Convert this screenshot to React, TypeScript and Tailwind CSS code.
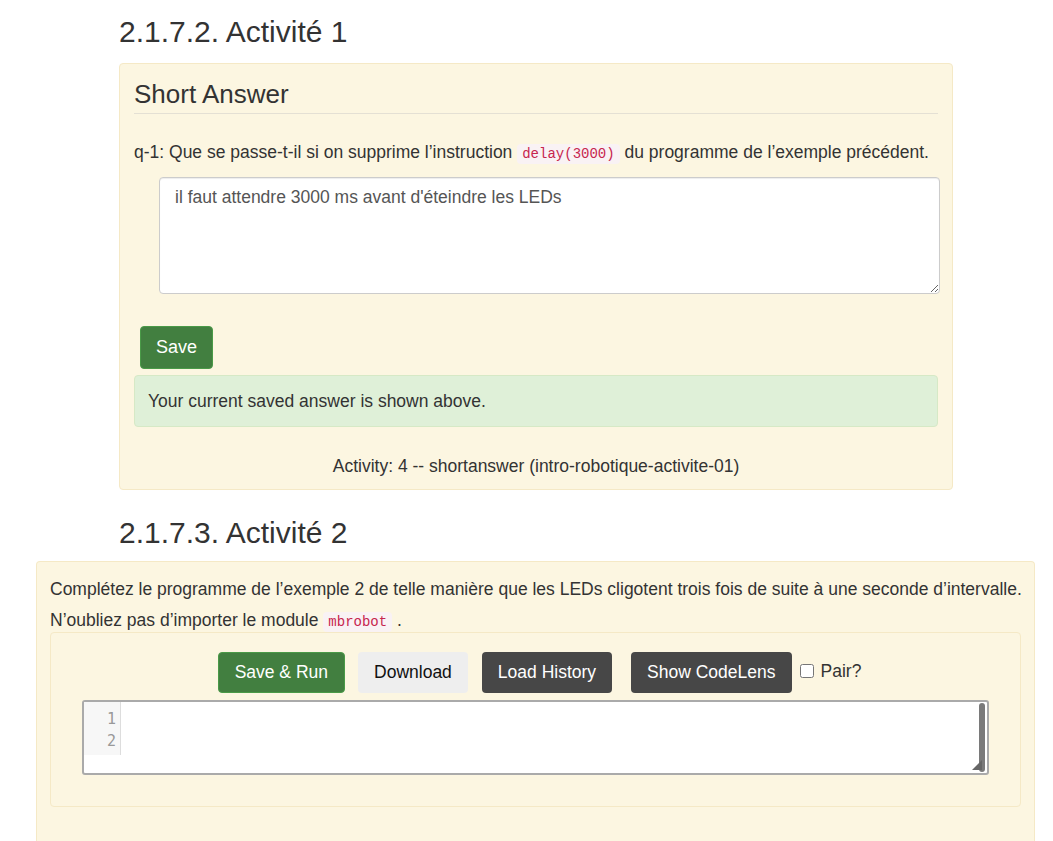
import React from 'react';

const font = { fontFamily: '"Liberation Sans", Arial, sans-serif' };

const Code = ({ children }: { children: React.ReactNode }) => (
  <code className="rounded bg-[#f9f2f4] px-[5px] py-[2px] font-['Liberation_Mono',monospace] text-[14px] text-[#c7254e]">
    {children}
  </code>
);

const ShortAnswer = () => (
  <div className="ml-[119px] w-[834px] rounded border border-[#f5e9c6] bg-[#fcf6e1] px-[14px] pb-[11px] pt-[15px]">
    <h4 className="border-b border-[#e4e0d4] pb-[4px] text-[26px] leading-[30px] text-[#333]">Short Answer</h4>
    <p className="mt-[26px] whitespace-nowrap text-[17.5px] leading-[24px] text-[#333]">
      q-1: Que se passe-t-il si on supprime l’instruction <Code>delay(3000)</Code> du programme de l’exemple précédent.
    </p>
    <div className="ml-[25px] mt-[11px]">
      <textarea
        className="block h-[117px] w-[781px] resize-y rounded border border-[#ccc] bg-white px-[15px] py-[7px] text-[17.5px] leading-[24px] text-[#555] shadow-[inset_0_1px_1px_rgba(0,0,0,0.075)] outline-none"
        defaultValue="il faut attendre 3000 ms avant d'éteindre les LEDs"
        style={font}
      />
    </div>
    <button className="ml-[6px] mt-[32px] h-[43px] rounded border border-[#4a9a48] bg-[#427f40] px-[15px] text-[18px] text-white">
      Save
    </button>
    <div className="mt-[6px] rounded border border-[#d6e9c6] bg-[#dff0d8] px-[13px] py-[13px] text-[17.5px] leading-[24px] text-[#333]">
      Your current saved answer is shown above.
    </div>
    <p className="mt-[27px] text-center text-[17.5px] leading-[24px] text-[#333]">
      Activity: 4 -- shortanswer (intro-robotique-activite-01)
    </p>
  </div>
);

const Btn = ({ children, className }: { children: React.ReactNode; className: string }) => (
  <button className={`h-[41px] whitespace-nowrap rounded px-[16px] text-[17.5px] ${className}`}>{children}</button>
);

const CodeEditor = () => (
  <div className="mx-[31px] mt-[7px] flex h-[75px] rounded-[3px] border-2 border-[#aaa] bg-white">
    <div className="flex h-[53px] w-[37px] flex-col items-end border-r border-[#ddd] bg-[#f7f7f7] pr-[4px] pt-[6px] font-['DejaVu_Sans_Mono',monospace] text-[15px] leading-[22px] text-[#999]">
      <span>1</span>
      <span>2</span>
    </div>
    <div className="flex-1" />
    <div className="relative my-[1px] mr-[2px] w-[6px] rounded-[3px] bg-[#7a7a7a]">
      <svg className="absolute bottom-[2px] right-[3px]" width="10" height="10" viewBox="0 0 10 10">
        <path d="M10 0 L10 10 L0 10 Z" fill="#666" />
      </svg>
    </div>
  </div>
);

const ActiveCode = () => (
  <div className="ml-[36px] w-[999px] rounded-t border border-b-0 border-[#f5e9c6] bg-[#fcf6e1] px-[13px] pb-[40px] pt-[12px] text-[#333]">
    <p className="whitespace-nowrap text-[17.5px] leading-[31px]">
      Complétez le programme de l’exemple 2 de telle manière que les LEDs cligotent trois fois de suite à une seconde d’intervalle.
      <br />
      N’oubliez pas d’importer le module <Code>mbrobot</Code> .
    </p>
    <div className="mt-[-6px] h-[175px] rounded border border-[#f5e9c6] pt-[19px]">
      <div className="flex items-start justify-center">
        <Btn className="ml-[8px] border border-[#4a9a48] bg-[#427f40] text-white">Save &amp; Run</Btn>
        <Btn className="ml-[13px] bg-[#eeeeee] text-[#111]">Download</Btn>
        <Btn className="ml-[14px] bg-[#474747] text-white">Load History</Btn>
        <Btn className="ml-[19px] bg-[#474747] text-white">Show CodeLens</Btn>
        <label className="ml-[8px] mt-[9px] flex items-center gap-[7px] text-[17.5px] leading-[20px]">
          <input type="checkbox" className="h-[14px] w-[14px]" />
          Pair?
        </label>
      </div>
      <CodeEditor />
    </div>
  </div>
);

export default function App() {
  return (
    <div className="min-h-[841px] bg-white pt-[15px]" style={font}>
      <h3 className="ml-[119px] mb-[15px] text-[30px] leading-[33px] text-[#333]">2.1.7.2. Activité 1</h3>
      <ShortAnswer />
      <h3 className="ml-[119px] mb-[12px] mt-[26px] text-[30px] leading-[33px] text-[#333]">2.1.7.3. Activité 2</h3>
      <ActiveCode />
    </div>
  );
}
